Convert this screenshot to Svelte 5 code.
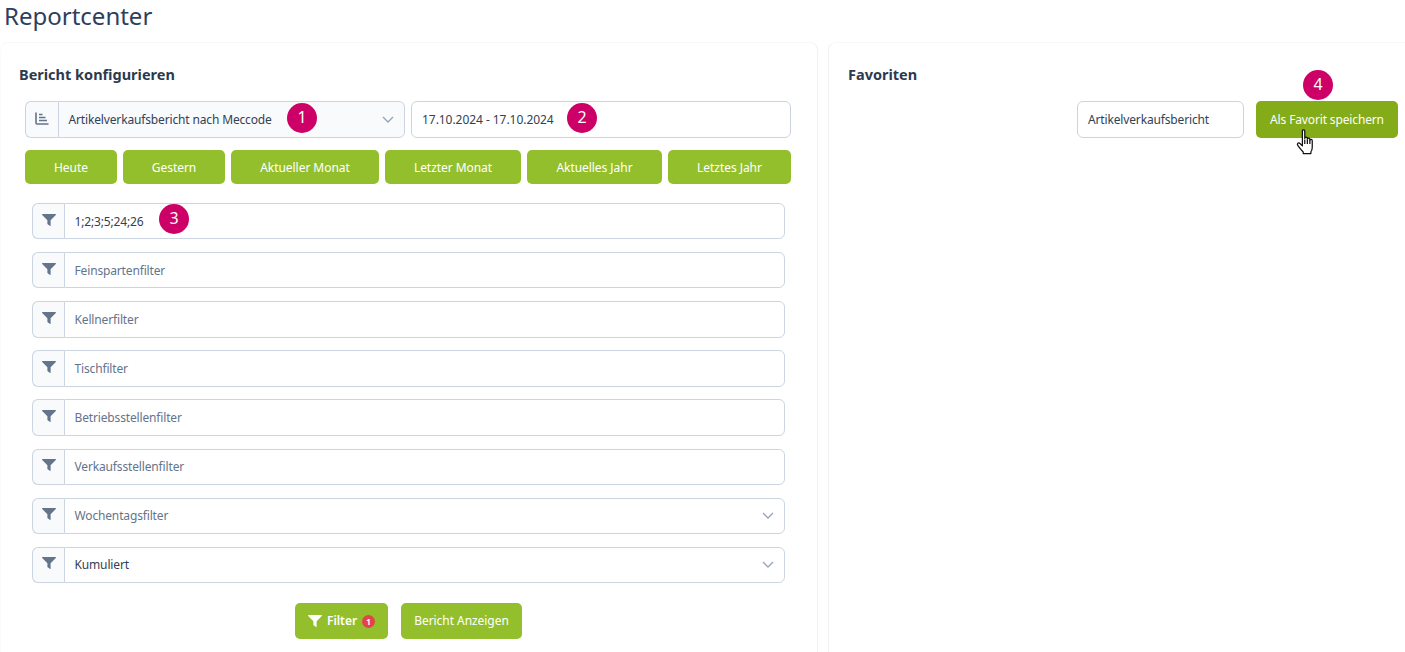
<script lang="ts">
  const ranges = ["Heute", "Gestern", "Aktueller Monat", "Letzter Monat", "Aktuelles Jahr", "Letztes Jahr"];

  type Filter = { text: string; filled?: boolean; select?: boolean };
  const filters: Filter[] = [
    { text: "1;2;3;5;24;26", filled: true },
    { text: "Feinspartenfilter" },
    { text: "Kellnerfilter" },
    { text: "Tischfilter" },
    { text: "Betriebsstellenfilter" },
    { text: "Verkaufsstellenfilter" },
    { text: "Wochentagsfilter", select: true },
    { text: "Kumuliert", filled: true, select: true }
  ];
</script>

{#snippet funnel()}
  <svg class="funnel" viewBox="0 0 14 12" aria-hidden="true">
    <path d="M0.6 0h12.8c.5 0 .8.6.4 1L8.6 6.2v5.2c0 .5-.5.7-.9.4L5.7 10.300c-.2-.1-.3-.3-.3-.5V6.200L.2 1C-.2.600.1 0 .6 0z" />
  </svg>
{/snippet}

{#snippet chevron()}
  <svg class="chevron" viewBox="0 0 12 7" aria-hidden="true">
    <path d="M1 1l5 5 5-5" />
  </svg>
{/snippet}

<div class="page">
  <h1>Reportcenter</h1>
  <div class="columns">
    <section class="card left">
      <h2>Bericht konfigurieren</h2>

      <div class="top-row">
        <div class="group">
          <span class="addon">
            <svg class="chart" viewBox="0 0 14 13" aria-hidden="true">
              <path d="M1 0.500v10.500c0 .6.400 1 1 1h11.500M4 2.500h3.500M4 5.500h6.500M4 8.500h8" />
            </svg>
          </span>
          <div class="field muted-bg">
            <span>Artikelverkaufsbericht nach Meccode</span>
            {@render chevron()}
          </div>
          <span class="pin pin-1">1</span>
        </div>
        <div class="group">
          <div class="field date"><span>17.10.2024 - 17.10.2024</span></div>
          <span class="pin pin-2">2</span>
        </div>
      </div>

      <div class="ranges">
        {#each ranges as range}
          <button class="btn">{range}</button>
        {/each}
      </div>

      <div class="filters">
        {#each filters as f, i}
          <div class="group">
            <span class="addon small">{@render funnel()}</span>
            <div class="field" class:placeholder={!f.filled}>
              <span>{f.text}</span>
              {#if f.select}{@render chevron()}{/if}
            </div>
            {#if i === 0}<span class="pin pin-3">3</span>{/if}
          </div>
        {/each}
      </div>

      <div class="actions">
        <button class="btn action">
          {@render funnel()}
          <b>Filter</b>
          <span class="count">1</span>
        </button>
        <button class="btn action report">Bericht Anzeigen</button>
      </div>
    </section>

    <section class="card right">
      <h2>Favoriten</h2>
      <div class="fav-row">
        <div class="field fav-name"><span>Artikelverkaufsbericht</span></div>
        <div class="fav-save">
          <span class="pin pin-4">4</span>
          <button class="btn save">Als Favorit speichern</button>
          <svg class="hand" viewBox="0 0 18 26" aria-hidden="true">
            <path d="M6 1.800c0-1.300 2.300-1.300 2.300 0v7.200c.1-1.500 2.400-1.500 2.500 0v.8c.1-1.300 2.300-1.300 2.400.100v.9c.2-1.200 2.300-1 2.300.4v6.300c0 2.200-.5 3.300-1.300 4.400v1.800H6.800v-1.600C5.500 21 3.700 18.700 1.700 16c-1.400-1.900.5-3.400 2-2l2.300 2.300z" />
            <path class="lines" d="M8.300 10v4.500M10.800 10v4.500M13.200 10.500v4" />
          </svg>
        </div>
      </div>
    </section>
  </div>
</div>

<style>
  :global(body) {
    background: #fff;
    font-family: "Noto Sans", "Open Sans", sans-serif;
    font-size: 12px;
    color: #334155;
  }

  .page {
    height: 652px;
    overflow: hidden;
  }

  .page :global(*) {
    box-sizing: border-box;
  }

  h1 {
    margin: 0;
    padding: 0 0 0 4px;
    height: 42px;
    font-size: 24px;
    line-height: 32px;
    font-weight: 400;
    color: #2d3e5e;
  }

  .columns {
    display: grid;
    grid-template-columns: 818px 1fr;
    gap: 10px;
    height: 610px;
  }

  .card {
    border: 1px solid #eff1f4;
    border-top-color: #f6f7f9;
    border-bottom: 0;
    border-radius: 8px 8px 0 0;
    padding-top: 22px;
  }

  .left {
    padding-left: 18px;
    border-left-color: #fbfbfc;
  }

  .right {
    padding-left: 19px;
    padding-right: 7px;
    border-right: 0;
    border-radius: 8px 0 0 0;
  }

  h2 {
    margin: 0;
    font-size: 14.500px;
    line-height: 19px;
    font-weight: 700;
    color: #2c3a4f;
  }

  .top-row {
    display: grid;
    grid-template-columns: 380px 380px;
    gap: 6px;
    margin: 17px 0 0 6px;
  }

  .group {
    position: relative;
    display: flex;
    height: 37px;
  }

  .filters .group {
    height: 36.400px;
  }

  .addon {
    flex: 0 0 33px;
    display: flex;
    align-items: center;
    justify-content: center;
    background: #f8fafc;
    border: 1px solid #cbd5e1;
    border-right: 0;
    border-radius: 6px 0 0 6px;
  }

  .addon.small {
    flex-basis: 32px;
    padding-bottom: 3px;
  }

  .chart {
    width: 14px;
    height: 13px;
    margin-bottom: 2px;
    fill: none;
    stroke: #64748b;
    stroke-width: 1.600;
  }

  .funnel {
    width: 14px;
    height: 12px;
    fill: #64748b;
  }

  .field {
    flex: 1;
    min-width: 0;
    display: flex;
    align-items: center;
    justify-content: space-between;
    padding: 0 10px 0 9.500px;
    background: #fff;
    border: 1px solid #cbd5e1;
    border-radius: 0 6px 6px 0;
    color: #334155;
    font-size: 12px;
    letter-spacing: -0.150px;
  }

  .muted-bg {
    background: #f8fafc;
  }

  .date,
  .fav-name {
    border-radius: 6px;
    padding-left: 10px;
  }

  .date {
    letter-spacing: -0.050px;
  }

  .placeholder {
    color: #64748b;
  }

  .chevron {
    width: 12px;
    height: 7px;
    fill: none;
    stroke: #94a3b8;
    stroke-width: 1.300;
  }

  .ranges {
    display: flex;
    gap: 6px;
    margin: 12px 0 0 6px;
    width: 766px;
  }

  .btn {
    border: 0;
    background: #94bf2c;
    color: #fff;
    font: inherit;
    font-size: 12px;
    letter-spacing: -0.050px;
    border-radius: 5px;
    height: 34px;
    padding: 0;
  }

  .ranges .btn:nth-child(1) { width: 92px; }
  .ranges .btn:nth-child(2) { width: 102px; }
  .ranges .btn:nth-child(3) { width: 148px; }
  .ranges .btn:nth-child(4) { width: 136px; }
  .ranges .btn:nth-child(5) { width: 135px; }
  .ranges .btn:nth-child(6) { width: 123px; }

  .filters {
    display: flex;
    flex-direction: column;
    gap: 12.740px;
    margin: 18.900px 0 0 13px;
    width: 753px;
  }

  .actions {
    display: flex;
    justify-content: center;
    gap: 13px;
    margin: 19.700px 0 0 13px;
    width: 753px;
  }

  .action {
    height: 36px;
    display: flex;
    align-items: center;
    gap: 5px;
    width: 93px;
    padding: 0 0 0 13px;
  }

  .action .funnel {
    fill: #fff;
    width: 14px;
  }

  .action b {
    font-weight: 600;
  }

  .report {
    width: 121px;
    padding: 0;
    justify-content: center;
  }

  .count {
    width: 13px;
    height: 13px;
    border-radius: 50%;
    background: #e5424d;
    font-size: 8px;
    font-weight: 700;
    line-height: 13px;
    text-align: center;
    letter-spacing: 0;
    margin-top: 1px;
  }

  .pin {
    position: absolute;
    width: 30px;
    height: 30px;
    border-radius: 50%;
    background: #cc0066;
    color: #fff;
    font-size: 16px;
    line-height: 29px;
    text-align: center;
    letter-spacing: 0;
    z-index: 2;
  }

  .pin-1 { left: 262px; top: 2px; }
  .pin-2 { left: 156px; top: 2px; }
  .pin-3 { left: 127px; top: 1px; }
  .pin-4 { left: 47px; top: -31px; }

  .fav-row {
    display: flex;
    justify-content: flex-end;
    gap: 12px;
    margin-top: 17px;
  }

  .fav-name {
    flex: 0 0 167px;
    height: 37px;
  }

  .fav-save {
    position: relative;
  }

  .save {
    display: block;
    width: 142px;
    height: 37px;
    background: #84ab18;
    letter-spacing: -0.140px;
  }

  .hand {
    position: absolute;
    left: 40px;
    top: 28px;
    width: 19px;
    height: 27px;
    fill: #fff;
    stroke: #111;
    stroke-width: 1.200;
    stroke-linejoin: round;
  }

  .lines {
    fill: none;
  }
</style>
